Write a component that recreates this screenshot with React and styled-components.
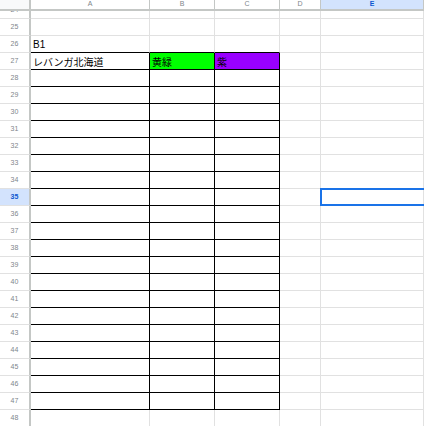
import React from "react";
import styled, { createGlobalStyle, css } from "styled-components";

const GlobalStyle = createGlobalStyle`
  html, body {
    margin: 0;
    padding: 0;
    background: #fff;
    overflow: hidden;
  }
  * {
    box-sizing: border-box;
  }
`;

const COLS = ["A", "B", "C", "D", "E"];
const ROWS = Array.from({ length: 25 }, (_, i) => 24 + i);

// bordered table on the sheet
const TABLE = { top: 27, bottom: 47, cols: ["A", "B", "C"] };

const values = {
  26: { A: "B1" },
  27: { A: "レバンガ北海道", B: "黄緑", C: "紫" },
};

const fills = {
  27: { B: "#00ff00", C: "#9900ff" },
};

const selected = { row: 35, col: "E" };

const HEADER_LINE = "#c4c7c5";
const GRID_LINE = "#e1e1e1";

function App() {
  return (
    <>
      <GlobalStyle />
      <Sheet>
        <Corner />
        {COLS.map(c => (
          <ColHeader key={c} $active={c === selected.col}>
            <span>{c}</span>
          </ColHeader>
        ))}

        {ROWS.map(r => (
          <React.Fragment key={r}>
            <RowHeader $active={r === selected.row} $partial={r === 24}>
              <span>{r}</span>
            </RowHeader>
            {COLS.map(c => {
              const inTable =
                TABLE.cols.includes(c) && r >= TABLE.top && r <= TABLE.bottom;
              const aboveTable = TABLE.cols.includes(c) && r === TABLE.top - 1;
              return (
                <Cell
                  key={c}
                  $rightBlack={inTable}
                  $bottomBlack={inTable || aboveTable}
                  $fill={fills[r] && fills[r][c]}
                  $selected={r === selected.row && c === selected.col}
                >
                  {values[r] && values[r][c]}
                </Cell>
              );
            })}
          </React.Fragment>
        ))}
      </Sheet>
    </>
  );
}

export default App;

const Sheet = styled.div`
  display: grid;
  grid-template-columns: 31px 119px 65px 65px 41px 1fr;
  grid-template-rows: 11px 8px repeat(24, 17px);
  width: 424px;
  height: 426px;
  overflow: hidden;
  font-family: "Liberation Sans", Arial, "Noto Sans CJK JP", sans-serif;
`;

const Corner = styled.div`
  background: #f8f9fa;
  border-right: 2px solid ${HEADER_LINE};
  border-bottom: 2px solid ${HEADER_LINE};
`;

const ColHeader = styled.div`
  display: flex;
  justify-content: center;
  overflow: hidden;
  background: ${p => (p.$active ? "#d3e3fd" : "#fff")};
  border-right: 1px solid ${HEADER_LINE};
  border-bottom: 2px solid ${HEADER_LINE};
  font-size: 7px;
  line-height: 7px;
  color: ${p => (p.$active ? "#0b57d0" : "#80868b")};
  font-weight: ${p => (p.$active ? 700 : 400)};
`;

const RowHeader = styled.div`
  display: flex;
  justify-content: center;
  align-items: ${p => (p.$partial ? "flex-end" : "center")};
  overflow: hidden;
  background: ${p => (p.$active ? "#d3e3fd" : "#fff")};
  border-right: 2px solid ${HEADER_LINE};
  border-bottom: 1px solid ${GRID_LINE};
  font-size: 7px;
  line-height: 16px;
  color: ${p => (p.$active ? "#0b57d0" : "#80868b")};
  font-weight: ${p => (p.$active ? 700 : 400)};

  span {
    flex-shrink: 0;
  }
`;

const Cell = styled.div`
  position: relative;
  display: flex;
  align-items: center;
  padding-left: 2px;
  white-space: nowrap;
  background: ${p => p.$fill || "#fff"};
  border-right: 1px solid ${p => (p.$rightBlack ? "#000" : GRID_LINE)};
  border-bottom: 1px solid ${p => (p.$bottomBlack ? "#000" : GRID_LINE)};
  font-size: 10px;
  color: #000;

  ${p =>
    p.$selected &&
    css`
      &::after {
        content: "";
        position: absolute;
        top: -1px;
        left: -1px;
        right: -4px;
        bottom: -1px;
        border: 2px solid #1a73e8;
        pointer-events: none;
      }
    `}
`;
